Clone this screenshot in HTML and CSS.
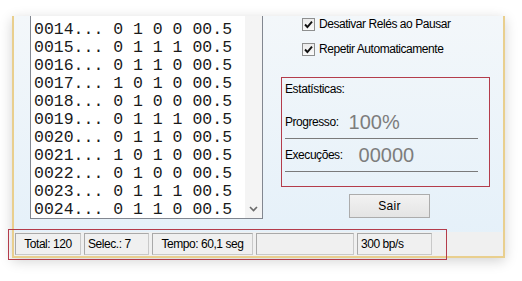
FILE: index.html
```html
<!DOCTYPE html>
<html lang="pt">
<head>
<meta charset="utf-8">
<title>Estatísticas</title>
<link rel="stylesheet" href="styles.css">
</head>
<body>
<div class="stage">
  <div class="window">
    <div class="main">
      <div class="listbox">
        <div class="list-rows">
          <div class="row">0014... 0 1 0 0 00.5</div>
          <div class="row">0015... 0 1 1 1 00.5</div>
          <div class="row">0016... 0 1 1 0 00.5</div>
          <div class="row">0017... 1 0 1 0 00.5</div>
          <div class="row">0018... 0 1 0 0 00.5</div>
          <div class="row">0019... 0 1 1 1 00.5</div>
          <div class="row">0020... 0 1 1 0 00.5</div>
          <div class="row">0021... 1 0 1 0 00.5</div>
          <div class="row">0022... 0 1 0 0 00.5</div>
          <div class="row">0023... 0 1 1 1 00.5</div>
          <div class="row">0024... 0 1 1 0 00.5</div>
        </div>
        <div class="scrollbar">
          <svg class="chev" width="9" height="6" viewBox="0 0 9 6"><path d="M1 1 L4.5 4.5 L8 1" fill="none" stroke="#6b6b6b" stroke-width="1.6"/></svg>
        </div>
      </div>
      <div class="side">
        <label class="check-row"><span class="checkbox"><svg width="9" height="9" viewBox="0 0 9 9"><path d="M1 4.5 L3.4 7 L8 1.6" fill="none" stroke="#111" stroke-width="1.9"/></svg></span><span class="check-label">Desativar Relés ao Pausar</span></label>
        <label class="check-row"><span class="checkbox"><svg width="9" height="9" viewBox="0 0 9 9"><path d="M1 4.5 L3.4 7 L8 1.6" fill="none" stroke="#111" stroke-width="1.9"/></svg></span><span class="check-label">Repetir Automaticamente</span></label>
        <div class="stats">
          <div class="stats-title">Estatísticas:</div>
          <div class="stat-row">
            <span class="stat-label">Progresso:</span>
            <span class="stat-value value-progress">100%</span>
          </div>
          <div class="stat-row">
            <span class="stat-label">Execuções:</span>
            <span class="stat-value value-runs">00000</span>
          </div>
        </div>
        <button class="btn">Sair</button>
      </div>
    </div>
    <div class="statusbar">
      <div class="panel p1 center">Total: 120</div>
      <div class="panel p2">Selec.: 7</div>
      <div class="panel p3 center">Tempo: 60,1 seg</div>
      <div class="panel p4"></div>
      <div class="panel p5">300 bp/s</div>
    </div>
  </div>
  <div class="highlight"></div>
</div>
</body>
</html>
```
FILE: styles.css
```css
* { box-sizing: border-box; }
html, body { margin: 0; padding: 0; background: #fff; }
body { width: 522px; height: 281px; overflow: hidden; font-family: "Liberation Sans", Arial, sans-serif; font-size: 12px; color: #000; }

.stage { position: relative; width: 522px; height: 281px; padding-top: 16px; }

.window {
  margin-left: 12px;
  width: 493px;
  height: 242px;
  border: 2px solid #e9cf8e;
  border-top: none;
  background: linear-gradient(#f3f7fa, #e4f0f9);
  box-shadow: 0 3px 12px rgba(0,0,0,0.18);
  display: flex;
  flex-direction: column;
}

.main { display: flex; height: 216px; padding-left: 16px; }

.listbox {
  width: 233px;
  height: 203px;
  background: #fff;
  border: 1px solid #828790;
  border-top: none;
  display: flex;
  overflow: hidden;
}
.list-rows {
  flex: 1;
  padding: 5px 0 0 3px;
  font-family: "Liberation Mono", "Courier New", monospace;
  font-size: 16.5px;
  line-height: 18px;
  color: #1a1a1a;
}
.row { white-space: pre; height: 18px; }
.scrollbar {
  width: 17px;
  background: #f4f4f4;
  display: flex;
  flex-direction: column;
  justify-content: flex-end;
  align-items: center;
  padding-bottom: 6px;
}

.side { margin-left: 18px; width: 209px; display: flex; flex-direction: column; }

.check-row { display: flex; align-items: center; height: 16px; padding-left: 21px; margin-bottom: 9px; }
.check-row + .check-row { margin-bottom: 20px; }
.checkbox {
  width: 13px; height: 13px;
  border: 1px solid #8e8f8f;
  background: linear-gradient(#ebebeb, #fafafa);
  display: flex; align-items: center; justify-content: center;
  margin-right: 4px;
}
.check-label { letter-spacing: -0.45px; }

.stats {
  height: 110px;
  border: 1px solid #b43c4b;
  padding: 4px 11px 0 3px;
  display: flex; flex-direction: column;
}
.stats-title { line-height: 14px; height: 24px; letter-spacing: -0.4px; }
.stat-row {
  height: 33px;
  display: flex; align-items: center;
  border-bottom: 1px solid #7a7a7a;
}
.stat-label { letter-spacing: -0.45px; }
.stat-value { font-size: 20px; color: #7d7d7d; }
.value-progress { margin-left: 10px; }
.value-runs { margin-left: 16px; }

.btn {
  margin: 7px 0 0 68px;
  width: 81px; height: 24px;
  font-family: "Liberation Sans", Arial, sans-serif;
  font-size: 12px;
  letter-spacing: 0.3px;
  color: #000;
  border: 1px solid #acacac;
  background: linear-gradient(#f2f2f2, #e4e4e4);
  padding: 0;
}

.statusbar {
  height: 24px;
  background: #f0f0f0;
  display: flex;
  gap: 3px;
  padding: 1px 0 0 1px;
}
.panel {
  height: 22px;
  border: 1px solid #c9c9c9;
  border-top-color: #a9a9a9;
  border-left-color: #a9a9a9;
  display: flex; align-items: center;
  padding-left: 3px;
  letter-spacing: -0.45px;
  white-space: nowrap;
}
.panel.center { justify-content: center; padding-left: 0; }
.p1 { width: 66px; }
.p2 { width: 65px; }
.p3 { width: 101px; }
.p4 { width: 98px; }
.p5 { width: 75px; }

.highlight {
  position: absolute;
  left: 8px; top: 229px;
  width: 439px; height: 31px;
  border: 1px solid #b43c4b;
}
```
